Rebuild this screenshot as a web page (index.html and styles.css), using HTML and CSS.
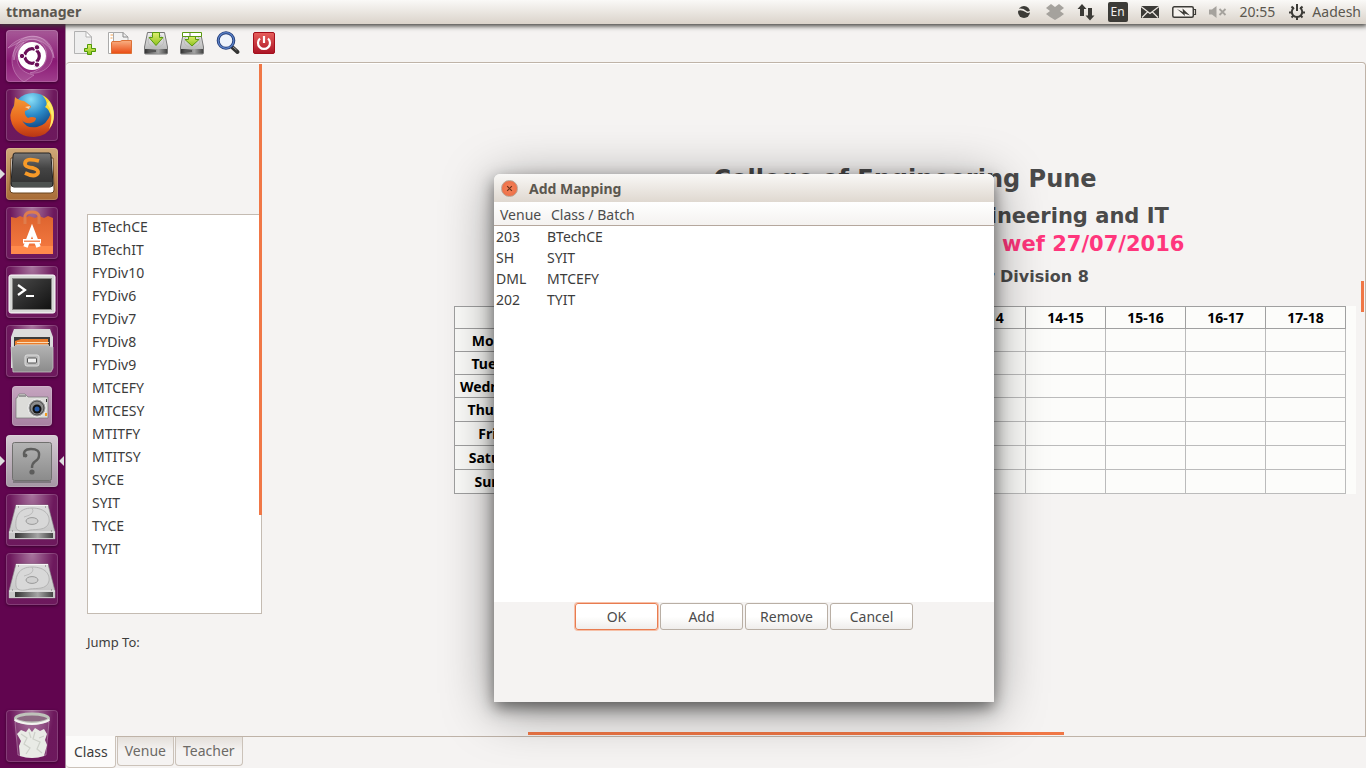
FILE: index.html
```html
<!DOCTYPE html>
<html lang="en">
<head>
<meta charset="utf-8">
<title>ttmanager</title>
<link rel="stylesheet" href="styles.css">
</head>
<body>
<svg class="defs" width="0" height="0" aria-hidden="true">
  <defs>
    <linearGradient id="metal" x1="0" y1="0" x2="0" y2="1"><stop offset="0" stop-color="#f0f0f0"/><stop offset="1" stop-color="#a9a9a9"/></linearGradient>
    <linearGradient id="plate" x1="0" y1="0" x2="0" y2="1"><stop offset="0" stop-color="#dedede"/><stop offset="1" stop-color="#c2c2c2"/></linearGradient>
    <linearGradient id="front" x1="0" y1="0" x2="0" y2="1"><stop offset="0" stop-color="#b4b4b4"/><stop offset="1" stop-color="#8b8b8b"/></linearGradient>
    <linearGradient id="edge" x1="0" y1="0" x2="1" y2="0"><stop offset="0" stop-color="#333"/><stop offset=".6" stop-color="#a5a5a5"/><stop offset="1" stop-color="#444"/></linearGradient>
    <linearGradient id="orange" x1="0" y1="0" x2="0" y2="1"><stop offset="0" stop-color="#f9b184"/><stop offset="1" stop-color="#ea4a12"/></linearGradient>
    <linearGradient id="bag" x1="0" y1="0" x2="0" y2="1"><stop offset="0" stop-color="#dd642f"/><stop offset="1" stop-color="#f77b42"/></linearGradient>
    <linearGradient id="green" x1="0" y1="0" x2="0" y2="1"><stop offset="0" stop-color="#e0f070"/><stop offset="1" stop-color="#8cc01c"/></linearGradient>
    <linearGradient id="dark" x1="0" y1="0" x2="0" y2="1"><stop offset="0" stop-color="#777"/><stop offset=".45" stop-color="#444"/><stop offset="1" stop-color="#303030"/></linearGradient>
    <linearGradient id="screen" x1="0" y1="0" x2="1" y2="1"><stop offset="0" stop-color="#4a4a4a"/><stop offset="1" stop-color="#111"/></linearGradient>
    <linearGradient id="red" x1="0" y1="0" x2="0" y2="1"><stop offset="0" stop-color="#e8605c"/><stop offset="1" stop-color="#ab1325"/></linearGradient>
    <radialGradient id="globe" cx=".45" cy=".15" r=".85"><stop offset="0" stop-color="#8be0f8"/><stop offset=".45" stop-color="#2a8ac8"/><stop offset="1" stop-color="#082a66"/></radialGradient>
    <linearGradient id="fox" x1="0" y1="0" x2="0" y2="1"><stop offset="0" stop-color="#f49a35"/><stop offset=".6" stop-color="#e8641c"/><stop offset="1" stop-color="#b83514"/></linearGradient>
    <symbol id="disk" viewBox="0 0 52 52">
      <path d="M10 11H42L49 38V45H3V38Z" fill="url(#plate)" stroke="#8a8a8a" stroke-width=".6"/>
      <path d="M10 11.500H42" stroke="#f5f5f5"/>
      <path d="M3 38H49V45H3Z" fill="#c9c9c9"/>
      <path d="M9 39H47V44H9Z" fill="url(#edge)"/>
      <path d="M3 38H49" stroke="#eee"/>
      <path d="M10 33C9 24 12 14 26 14C40 14 44 22 43 28C41 37 30 35 24 36C17 38 11 38 10 33Z" fill="#d8d8d8" stroke="#b0b0b0" stroke-width=".9"/>
      <path d="M26 14Q30 20 18 23" fill="none" stroke="#b8b8b8" stroke-width=".9"/>
      <ellipse cx="26" cy="27" rx="6" ry="3.400" fill="#d0d0d0" stroke="#999"/>
      <path d="M12 13h1M39 13h1M6 37h1M45 37h1" stroke="#777"/>
    </symbol>
    <symbol id="drive" viewBox="0 0 24 24">
      <path d="M3.500 1.500H20.500L23.500 16V22Q23.500 23 22.500 23H1.500Q.5 23 .5 22V16Z" fill="url(#metal)" stroke="#777"/>
      <path d="M1 18H23V22.500H1Z" fill="url(#edge)"/>
      <path d="M5 19h7v2H5Z" fill="#555"/>
      <ellipse cx="12" cy="10" rx="8" ry="6.500" fill="none" stroke="#bbb"/>
    </symbol>
  </defs>
</svg>

<header class="panel">
  <span class="panel-title">ttmanager</span>
  <div class="tray">
    <svg width="18" height="18" viewBox="0 0 18 18"><circle cx="9" cy="9" r="6" fill="#3c3b37"/><path d="M2.500 7C6 5.500 9 7 11 8.500S14 9.500 16 8" fill="none" stroke="#efebe5" stroke-width="1.500"/></svg>
    <svg width="18" height="18" viewBox="0 0 18 18"><path d="M5 1 9 4 13 1 18 5 14 8 18 11 14 14 9 17 4 14 0 11 4 8 0 5Z" fill="#a5a29d"/></svg>
    <svg width="18" height="18" viewBox="0 0 18 18"><path d="M5 1 9.500 6H7V13H3V6H.5ZM13 17.500 8.500 12.500H11V5H15V12.500H17.500Z" fill="#3c3b37"/></svg>
    <span class="lang">En</span>
    <svg width="18" height="18" viewBox="0 0 18 18"><path d="M0 3H18V15H0Z" fill="#3c3b37"/><path d="M0 3.500 9 10.500 18 3.500M1 14.500 6.500 9M17 14.500 11.500 9" fill="none" stroke="#eee9e3" stroke-width="1.200"/></svg>
    <svg width="24" height="18" viewBox="0 0 24 18"><rect x=".8" y="3.800" width="20.500" height="10.500" rx="1.500" fill="#f6f3ef" stroke="#3c3b37" stroke-width="1.500"/><path d="M22 6.500h1.500v5H22" fill="none" stroke="#3c3b37" stroke-width="1.200"/><path d="M5 6 11 9 10.500 5.500 18 12.500 12.500 10.500 13 13Z" fill="#3c3b37"/></svg>
    <svg width="18" height="18" viewBox="0 0 18 18"><path d="M0 6.500H3L7.500 3V15L3 11.500H0Z" fill="#a5a29d"/><path d="M10.500 6 16.500 12M16.500 6 10.500 12" stroke="#a5a29d" stroke-width="1.800"/></svg>
    <time>20:55</time>
    <span class="user"><svg width="18" height="18" viewBox="0 0 18 18"><g fill="none" stroke="#3c3b37"><path d="M6 4.600A5.200 5.200 0 1 0 12 4.600" stroke-width="2"/><path d="M9 1V8" stroke-width="2"/><path d="M3.500 3.500 5.500 5.500M14.500 3.500 12.500 5.500M1 9.500H4M14 9.500H17M3.500 14.500 5.500 12.500M14.500 14.500 12.500 12.500M9 14V17" stroke-width="2"/></g></svg>Aadesh</span>
  </div>
</header>

<div class="desktop">
  <nav class="launcher" aria-label="Launcher">
    <button class="tile ubuntu" aria-label="Dash"><svg viewBox="0 0 52 52"><g fill="#fff" fill-opacity=".1" stroke="#e0b5da" stroke-opacity=".4"><path d="M8 30C4 8 30 -2 42 14S40 45 24 43C52 36 40 4 22 10Q10 16 8 30Z"/><path d="M2 18C16 2 46 0 48 28C44 10 26 6 14 12Z"/><path d="M18 52C2 42 2 18 18 12C6 26 10 42 28 45Z"/></g><circle cx="26" cy="26" r="14" fill="#fff"/><circle cx="26" cy="26" r="7.300" fill="none" stroke="#6a0f58" stroke-width="3.200"/><path d="M26 26 14 26M26 26 32 15.600M26 26 32 36.400" stroke="#fff" stroke-width="1.500"/><circle cx="26" cy="26" r="5.200" fill="#fff"/><g fill="#6a0f58" stroke="#fff" stroke-width="1"><circle cx="16" cy="26" r="2.700"/><circle cx="31" cy="17.300" r="2.700"/><circle cx="31" cy="34.700" r="2.700"/></g></svg></button>
    <button class="tile" aria-label="Firefox"><svg viewBox="0 0 52 52"><circle cx="27" cy="25" r="21" fill="url(#globe)"/><path d="M36 6C49 12 52 30 42 40C48 28 43 20 39 18C43 15 39 9 36 6Z" fill="#fcd92c"/><path d="M9 8Q12 11 18 12L25 17Q25 20 19 22Q18 26 22 29Q26 27 30 29Q30 33 25 34Q19 35 16 31Q20 40 31 38Q41 36 45 24Q49 31 46 36Q42 47 28 48Q12 48 6 35Q2 25 8 17Z" fill="url(#fox)"/><path d="M43 12C49 20 50 33 43 40C46 32 47 22 41 15Z" fill="#ffe96b"/><path d="M19 18 24 17 23 20Z" fill="#f9d6b0"/></svg></button>
    <button class="tile sublime running" aria-label="Sublime Text"><svg viewBox="0 0 52 52"><path d="M5 10 4 42Q4 45 7 45H45Q48 45 48 42L47 10Z" fill="#fff" stroke="#6b4520"/><path d="M9 5H43Q45 5 45 8L47 36Q47 39 44 39H8Q5 39 5 36L7 8Q7 5 9 5Z" fill="url(#dark)" stroke="#222"/><path d="M6 34H46V38Q46 39 44 39H8Q6 39 6 37Z" fill="#4d5250"/><path d="M33 13Q19 9 19 16Q19 19 27 20Q33 22 32 25Q29 30 19 25" fill="none" stroke="#f79a28" stroke-width="3.800"/></svg></button>
    <button class="tile" aria-label="Software"><svg viewBox="0 0 52 52"><path d="M5 10 10 11 14 9 19 11 23 9 29 11 33 9 38 11 42 9 47 11V47H5Z" fill="url(#bag)"/><path d="M5 39H47V47H5Z" fill="#ff8a4c"/><path d="M19 17V9Q20 5 26 5T33 9V17" fill="none" stroke="#df7d4d" stroke-width="3"/><path d="M19.500 40 26 23 32.500 40" fill="none" stroke="#fff" stroke-width="4.500"/><path d="M17 32H35V36.500H17Z" fill="#fff"/><path d="M18 34.200H34" stroke="#ee7138" stroke-width="1.200"/></svg></button>
    <button class="tile" aria-label="Terminal"><svg viewBox="0 0 52 52"><rect x="3" y="9" width="46" height="38" rx="2" fill="#d7d8d6" stroke="#fff"/><rect x="6.500" y="12.500" width="39" height="31" fill="url(#screen)" stroke="#8a8a88"/><path d="M12 19 19 24 12 29" fill="none" stroke="#fff" stroke-width="2.200"/><path d="M20 30H28" stroke="#fff" stroke-width="2"/></svg></button>
    <button class="tile" aria-label="Files"><svg viewBox="0 0 52 52"><path d="M8 4H44L47 12V43H5V12Z" fill="#dcdcdc"/><path d="M8 12H44V23H8Z" fill="#3c3c3c"/><path d="M9 22V16L15 14H42V22Z" fill="#ea7d2c"/><path d="M11 17.500H43M11 20H43" stroke="#f9dbb6" stroke-width="1"/><path d="M5 22H8L10 20H42L44 22H47V43L45 47H7Z" fill="url(#front)" stroke="#c4c4c4" stroke-width=".8"/><rect x="19" y="30" width="14" height="11" rx="2" fill="#bbb" stroke="#ddd"/><rect x="21.500" y="33" width="9" height="5" rx="1" fill="#eee" stroke="#555"/></svg></button>
    <button class="tile small" aria-label="Screenshot"><svg viewBox="0 0 40 40"><path d="M5 12 7 8H13L16 11H36V32H4V12Z" fill="#dcdcd9" stroke="#777" stroke-width=".7"/><path d="M7 10h7" stroke="#999" stroke-width="2"/><circle cx="25" cy="22" r="9" fill="#aaa" stroke="#eee"/><circle cx="25" cy="22" r="7" fill="#8c8c8c" stroke="#444"/><circle cx="25" cy="23" r="4.500" fill="#111"/><circle cx="25" cy="23" r="2.500" fill="#275aa8"/><path d="M33 27h2v3h-2Z" fill="#f39a20"/><path d="M34 13h1v3h-1Z" fill="#333"/></svg></button>
    <button class="tile unknown running focused" aria-label="ttmanager"><svg viewBox="0 0 52 52"><rect x="6.500" y="7.500" width="39" height="38" rx="2" fill="url(#front)" stroke="#70706e"/><path d="M7 47H45" stroke="#555"/><path d="M18.500 22Q16 14 25 14T33 20.500Q33 24 29 26.500Q26 28.500 26 33" fill="none" stroke="#5d5d5c" stroke-width="2.400"/><circle cx="19.500" cy="20.500" r="1.900" fill="#5d5d5c"/><circle cx="26" cy="37" r="2.600" fill="#5d5d5c"/></svg></button>
    <button class="tile" aria-label="Volume 1"><svg viewBox="0 0 52 52"><use href="#disk"/></svg></button>
    <button class="tile" aria-label="Volume 2"><svg viewBox="0 0 52 52"><use href="#disk"/></svg></button>
    <button class="tile trash" aria-label="Trash"><svg viewBox="0 0 52 52"><path d="M9 12 12 45Q26 50 40 45L43 12Z" fill="#fff" fill-opacity=".1" stroke="#d9bdd3" stroke-opacity=".4"/><path d="M11 24 15 20 20 22 23 18 26 22 29 18 34 21 38 19 41 24 39 30 41 35 38 46Q26 50 14 46L13 36 15 31Z" fill="#e9ebe6"/><path d="M15 24 21 28 18 34 24 38 20 44M29 22 27 29 34 32 31 39 36 43M23 22 25 28M38 26 33 28" fill="none" stroke="#cdd0c9" stroke-width="1.200"/><ellipse cx="26" cy="8.500" rx="16.500" ry="4.500" fill="#8d6a83" stroke="#bfc3bb" stroke-width="3"/><path d="M8.500 10Q26 18 43.500 10" fill="none" stroke="#f4f4f1" stroke-width="2"/></svg></button>
  </nav>

  <main class="app">
    <div class="toolbar" role="toolbar">
      <button aria-label="New"><svg viewBox="-1 0 24 24"><path d="M1.500.5H13L18.500 6V22.500H1.500Z" fill="#eee" stroke="#b3b3b3"/><path d="M13 .5V6H18.500Z" fill="#fff" stroke="#b3b3b3"/><path d="M14.500 13.500H18.500V17.500H22.500V20.500H18.500V23.500H14.500V20.500H11.500V17.500H14.500Z" fill="url(#green)" stroke="#4e9a06"/></svg></button>
      <button aria-label="Open"><svg viewBox="0 0 24 24"><path d="M.5 22.500V1.500H6V22.500Z" fill="#fff" stroke="#aaa"/><path d="M2.500 4h3M2.500 7h2" stroke="#f0a050"/><path d="M5.500 20V1.500H15L20 6V20Z" fill="#f2f2f2" stroke="#aaa"/><path d="M15 1.500V6H20" fill="none" stroke="#888"/><path d="M3.500 22.500V11.500Q3.500 10.500 5 10.500H12L14 9.500H23.500V22.500Z" fill="url(#orange)" stroke="#dc7136"/></svg></button>
      <button aria-label="Save"><svg viewBox="0 0 24 24"><use href="#drive"/><path d="M8.500 1.500H15.500V6.500H19L12 14.500 5 6.500H8.500Z" fill="url(#green)" stroke="#5a9a10"/></svg></button>
      <button aria-label="Save as"><svg viewBox="0 0 24 24"><use href="#drive"/><path d="M8.500 5H15.500V8.500H19L12 15 5 8.500H8.500Z" fill="url(#green)" stroke="#5a9a10"/><path d="M2.500 1.500H21.500V5.500H2.500Z" fill="#fff" stroke="#5a9a10"/><path d="M10 2V5" stroke="#666"/></svg></button>
      <button aria-label="Find"><svg viewBox="0 0 24 24"><path d="M16 16 21.500 21" stroke="#333" stroke-width="4" stroke-linecap="round"/><path d="M17 16 20.500 19" stroke="#999" stroke-width="1"/><circle cx="10" cy="9.500" r="7.800" fill="#eef3fb" stroke="#233c78" stroke-width="3"/><circle cx="10" cy="9.500" r="7.800" fill="none" stroke="#5b83c9" stroke-width="1.200"/></svg></button>
      <button aria-label="Quit"><svg viewBox="0 0 24 24"><rect x="1.500" y="1.500" width="21" height="21" rx="1.500" fill="url(#red)" stroke="#a40f1c"/><path d="M8 7.500A6 6 0 1 0 16 7.500M12 5V12" fill="none" stroke="#fff" stroke-width="2.200"/></svg></button>
    </div>

    <section class="page">
      <div class="classes">
        <ul class="class-list">
          <li>BTechCE</li><li>BTechIT</li><li>FYDiv10</li><li>FYDiv6</li><li>FYDiv7</li><li>FYDiv8</li><li>FYDiv9</li><li>MTCEFY</li><li>MTCESY</li><li>MTITFY</li><li>MTITSY</li><li>SYCE</li><li>SYIT</li><li>TYCE</li><li>TYIT</li>
        </ul>
        <p class="jump">Jump To:</p>
        <span class="scroll scroll-list"></span>
      </div>
      <div class="view">
        <h1>College of Engineering Pune</h1>
        <h2>Department of Computer Engineering and IT</h2>
        <h2 class="wef">Time Table for Semester I 2016 wef 27/07/2016</h2>
        <h3>Class Time Table for First Year Division 8</h3>
        <div class="sheet">
          <table class="timetable">
            <thead><tr><th class="day"></th><th>8-9</th><th>9-10</th><th>10-11</th><th>11-12</th><th>12-13</th><th>13-14</th><th>14-15</th><th>15-16</th><th>16-17</th><th>17-18</th></tr></thead>
            <tbody>
              <tr><th>Monday</th><td></td><td></td><td></td><td></td><td></td><td></td><td></td><td></td><td></td><td></td></tr>
              <tr><th>Tuesday</th><td></td><td></td><td></td><td></td><td></td><td></td><td></td><td></td><td></td><td></td></tr>
              <tr><th>Wednesday</th><td></td><td></td><td></td><td></td><td></td><td></td><td></td><td></td><td></td><td></td></tr>
              <tr><th>Thursday</th><td></td><td></td><td></td><td></td><td></td><td></td><td></td><td></td><td></td><td></td></tr>
              <tr><th>Friday</th><td></td><td></td><td></td><td></td><td></td><td></td><td></td><td></td><td></td><td></td></tr>
              <tr><th>Saturday</th><td></td><td></td><td></td><td></td><td></td><td></td><td></td><td></td><td></td><td></td></tr>
              <tr><th>Sunday</th><td></td><td></td><td></td><td></td><td></td><td></td><td></td><td></td><td></td><td></td></tr>
            </tbody>
          </table>
        </div>
      </div>
      <span class="scroll scroll-right"></span>
      <span class="scroll scroll-bottom"></span>
    </section>

    <div class="tabs" role="tablist">
      <button class="tab active" role="tab" aria-selected="true">Class</button>
      <button class="tab" role="tab">Venue</button>
      <button class="tab" role="tab">Teacher</button>
    </div>
  </main>
</div>

<div class="dialog" role="dialog" aria-labelledby="dialog-title">
  <div class="titlebar">
    <button class="close" aria-label="Close"><svg viewBox="0 0 16 16"><path d="M5.500 5.500 10.500 10.500M10.500 5.500 5.500 10.500" stroke="#6b3019" stroke-width="1.300"/></svg></button>
    <span id="dialog-title">Add Mapping</span>
  </div>
  <div class="mapping-box">
    <table class="mapping">
      <thead><tr><th class="venue">Venue</th><th>Class / Batch</th></tr></thead>
      <tbody>
        <tr><td>203</td><td>BTechCE</td></tr>
        <tr><td>SH</td><td>SYIT</td></tr>
        <tr><td>DML</td><td>MTCEFY</td></tr>
        <tr><td>202</td><td>TYIT</td></tr>
      </tbody>
    </table>
  </div>
  <div class="actions">
    <button class="default">OK</button>
    <button>Add</button>
    <button>Remove</button>
    <button>Cancel</button>
  </div>
</div>
</body>
</html>
```

FILE: styles.css
```css
* { box-sizing: border-box; }

body {
  margin: 0;
  height: 100vh;
  display: flex;
  flex-direction: column;
  overflow: hidden;
  background: #f5f3f2;
  color: #3c3c3c;
  font: 14px/20px "Noto Sans", "Open Sans", sans-serif;
}

button {
  margin: 0;
  padding: 0;
  border: 0;
  background: none;
  color: inherit;
  font: inherit;
}

svg { display: block; overflow: visible; }
.defs { position: absolute; }

/* top panel */
.panel {
  position: relative;
  z-index: 1;
  flex: none;
  height: 24px;
  padding: 0 5px 0 6px;
  display: flex;
  align-items: center;
  justify-content: space-between;
  background: linear-gradient(#faf9f7, #dad3ca);
  box-shadow: 0 1px 5px 1px #3c3b37;
  color: #5b574f;
}
.panel-title { font-weight: bold; }
.tray { display: flex; align-items: center; gap: 13px; }
.user { display: flex; align-items: center; gap: 6px; }
.lang {
  width: 20px;
  height: 20px;
  border-radius: 2px;
  background: #3c3b37;
  color: #f3f0ec;
  font-size: 12px;
  text-align: center;
}

.desktop { flex: 1; min-height: 0; display: flex; }

/* launcher */
.launcher {
  flex: none;
  width: 66px;
  padding: 6px 7px 6px 6px;
  display: flex;
  flex-direction: column;
  align-items: flex-start;
  gap: 7px;
  background: #61054f;
  border-right: 1px solid #a58a9f;
}
.tile {
  position: relative;
  flex: none;
  width: 52px;
  height: 52px;
  border-radius: 4px;
  background: radial-gradient(ellipse at 50% 0, rgba(255, 255, 255, .45), rgba(255, 255, 255, .08) 60%);
  box-shadow: inset 0 0 0 1px rgba(255, 255, 255, .16), 0 1px 3px rgba(0, 0, 0, .4);
}
.ubuntu { background: linear-gradient(#a75a98, #8a1a74 60%, #a03e8d); overflow: hidden; }
.sublime { background: linear-gradient(#d0a878, #a86c37); }
.unknown { background: linear-gradient(#d5cbd3, #a597a4); }
.small { width: 40px; height: 40px; margin: 2px 6px; background: linear-gradient(#c6a5c0, #a781a1); }
.trash { margin-top: auto; }
.running::before,
.focused::after {
  content: "";
  position: absolute;
  top: 21px;
  border: 5px solid transparent;
}
.running::before { left: -6px; border-left-color: #ddd; border-right-width: 0; }
.focused::after { right: -6px; border-right-color: #ddd; border-left-width: 0; }

/* application */
.app { flex: 1; min-width: 0; display: flex; flex-direction: column; }
.toolbar { flex: none; height: 38px; display: flex; align-items: center; }
.toolbar button { width: 36px; height: 36px; padding: 6px; }

.page {
  position: relative;
  flex: 1;
  min-height: 0;
  display: flex;
  gap: 192px;
  padding-right: 9px;
  border: 1px solid #bfb3a8;
  border-left: 0;
  border-radius: 4px 4px 0 0;
  box-shadow: inset 0 1px #fff;
}
.classes {
  position: relative;
  flex: none;
  width: 196px;
  padding: 151px 0 0 21px;
}
.class-list {
  height: 400px;
  margin: 0;
  padding: 0 4px;
  border: 1px solid #c4bbb2;
  background: #fff;
  list-style: none;
  line-height: 23px;
}
.jump { margin: 18px 0 0; font-size: 13px; }

.scroll { position: absolute; background: #f07746; }
.scroll-list { top: 1px; right: 0; width: 3px; height: 451px; }
.scroll-right { top: 218px; right: 1px; width: 3px; height: 31px; }
.scroll-bottom { bottom: 1px; left: 462px; width: 536px; height: 3px; }

.view { flex: 1; min-width: 0; padding-top: 100px; }
.view h1, .view h2, .view h3 {
  margin: 0;
  color: #4a4a4a;
  font-family: "DejaVu Sans", sans-serif;
  text-align: center;
  white-space: nowrap;
}
.view h1 { font-size: 24px; line-height: 32px; }
.view h2 { font-size: 21px; line-height: 28px; }
.view h1 + h2 { margin-top: 7px; }
.view .wef { color: #ff367c; }
.view h3 { margin: 8px 0 18px; font-size: 16px; line-height: 22px; }

.sheet { padding-right: 10px; background: #fcfcfa; }
.timetable {
  width: 100%;
  border-collapse: collapse;
  table-layout: fixed;
  color: #000;
  line-height: 20px;
}
.timetable tr { height: 23px; }
.timetable tr:nth-child(n+4) { height: 24px; }
.timetable thead tr { height: 22px; }
.timetable th, .timetable td { padding: 0; border: 1px solid #bbb; }
.timetable th { border-color: #a0a0a0; }
.timetable tbody th { padding-top: 1px; }
.timetable .day { width: 91px; }

/* notebook tabs */
.tabs { flex: none; height: 31px; display: flex; align-items: flex-start; gap: 1px; }
.tab {
  height: 29px;
  padding: 0 7px;
  border: 1px solid #cbc2b9;
  border-top: 0;
  border-radius: 0 0 4px 4px;
  background: linear-gradient(#e4dfda, #f5f3f2 50%);
  color: #6d6a66;
}
.tab.active {
  position: relative;
  height: 32px;
  margin-top: -1px;
  padding: 0 7px 0 8px;
  border-left: 0;
  background: #fcfbfa;
  color: #3c3c3c;
}

/* dialog window */
.dialog {
  position: absolute;
  z-index: 2;
  left: 494px;
  top: 174px;
  width: 500px;
  height: 528px;
  display: flex;
  flex-direction: column;
  border-radius: 6px 6px 0 0;
  background: #f5f3f2;
  box-shadow: 0 6px 16px rgba(0, 0, 0, .5), 0 8px 52px rgba(0, 0, 0, .4);
}
.titlebar {
  flex: none;
  height: 28px;
  padding: 1px 0 0 7px;
  display: flex;
  align-items: center;
  gap: 11px;
  border-radius: 6px 6px 0 0;
  background: linear-gradient(#f9f8f6, #dfd8d0);
  color: #5b574f;
  font-weight: bold;
}
.close {
  width: 17px;
  height: 17px;
  border: 1px solid #b9a595;
  border-radius: 50%;
  background: radial-gradient(#f5835a, #ea6a42);
}
.mapping-box { flex: none; height: 400px; background: #fff; }
.mapping { width: 100%; border-collapse: separate; border-spacing: 0; table-layout: fixed; }
.mapping th {
  height: 24px;
  padding: 2px 0 0 6px;
  border-bottom: 1px solid #b5a79d;
  background: linear-gradient(#fff, #f4f2f0);
  color: #4c4c4c;
  font-weight: normal;
  text-align: left;
}
.mapping td { height: 21px; padding: 1px 0 0 2px; }
.mapping .venue { width: 51px; }
.actions { display: flex; justify-content: center; gap: 2px; padding-top: 1px; }
.actions button {
  width: 83px;
  height: 27px;
  border: 1px solid #b9afa5;
  border-radius: 3px;
  background: linear-gradient(#fff 50%, #efedeb);
  color: #4c4c4c;
}
.actions .default { border-color: #e87c50; box-shadow: 0 0 0 1px #f6c0a8; }
```
